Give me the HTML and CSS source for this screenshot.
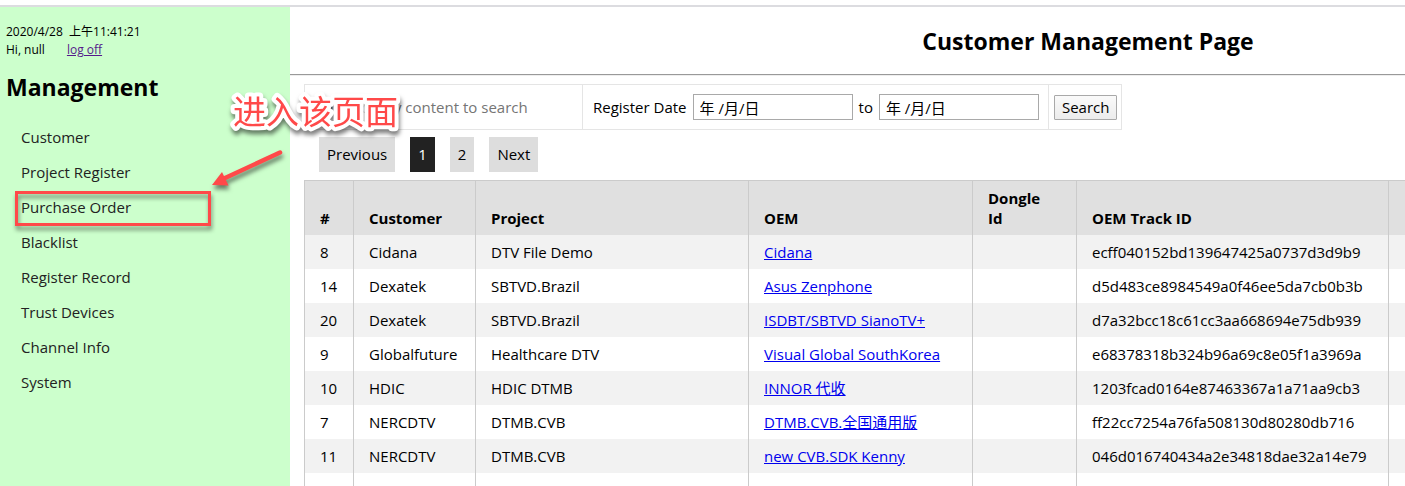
FILE: index.html
```
<!DOCTYPE html>
<html lang="en">
<head>
<meta charset="utf-8">
<title>Customer Management Page</title>
<link rel="stylesheet" href="styles.css">
</head>
<body>
<div class="layout">
  <aside class="sidebar">
    <div class="session">
      <div>2020/4/28 &nbsp;上午11:41:21</div>
      <div class="session-user"><span>Hi, null</span><a class="logoff" href="#">log off</a></div>
    </div>
    <h2 class="sidebar-title">Management</h2>
    <nav class="menu">
      <a href="#">Customer</a>
      <a href="#">Project Register</a>
      <a href="#" class="marked">Purchase Order</a>
      <a href="#">Blacklist</a>
      <a href="#">Register Record</a>
      <a href="#">Trust Devices</a>
      <a href="#">Channel Info</a>
      <a href="#">System</a>
    </nav>
  </aside>
  <main class="main">
    <header class="page-header"><h1>Customer Management Page</h1></header>
    <div class="content">
      <form class="search">
        <div class="search-text"><input type="text" aria-label="Search content" placeholder="Input query content to search"></div>
        <div class="search-dates">
          <label for="from">Register Date</label>
          <input id="from" type="text" value="年 /月/日">
          <label for="to">to</label>
          <input id="to" type="text" value="年 /月/日">
        </div>
        <div class="search-action"><button type="button">Search</button></div>
      </form>
      <nav class="pager">
        <a href="#">Previous</a>
        <a href="#" class="current">1</a>
        <a href="#">2</a>
        <a href="#">Next</a>
      </nav>
      <table class="records">
        <colgroup><col class="c-num"><col class="c-customer"><col class="c-project"><col class="c-oem"><col class="c-dongle"><col class="c-track"><col></colgroup>
        <thead>
          <tr><th>#</th><th>Customer</th><th>Project</th><th>OEM</th><th>Dongle<br>Id</th><th>OEM Track ID</th><th></th></tr>
        </thead>
        <tbody>
          <tr><td>8</td><td>Cidana</td><td>DTV File Demo</td><td><a href="#">Cidana</a></td><td></td><td>ecff040152bd139647425a0737d3d9b9</td><td></td></tr>
          <tr><td>14</td><td>Dexatek</td><td>SBTVD.Brazil</td><td><a href="#">Asus Zenphone</a></td><td></td><td>d5d483ce8984549a0f46ee5da7cb0b3b</td><td></td></tr>
          <tr><td>20</td><td>Dexatek</td><td>SBTVD.Brazil</td><td><a href="#">ISDBT/SBTVD SianoTV+</a></td><td></td><td>d7a32bcc18c61cc3aa668694e75db939</td><td></td></tr>
          <tr><td>9</td><td>Globalfuture</td><td>Healthcare DTV</td><td><a href="#">Visual Global SouthKorea</a></td><td></td><td>e68378318b324b96a69c8e05f1a3969a</td><td></td></tr>
          <tr><td>10</td><td>HDIC</td><td>HDIC DTMB</td><td><a href="#">INNOR 代收</a></td><td></td><td>1203fcad0164e87463367a1a71aa9cb3</td><td></td></tr>
          <tr><td>7</td><td>NERCDTV</td><td>DTMB.CVB</td><td><a href="#">DTMB.CVB.全国通用版</a></td><td></td><td>ff22cc7254a76fa508130d80280db716</td><td></td></tr>
          <tr><td>11</td><td>NERCDTV</td><td>DTMB.CVB</td><td><a href="#">new CVB.SDK Kenny</a></td><td></td><td>046d016740434a2e34818dae32a14e79</td><td></td></tr>
          <tr><td></td><td></td><td></td><td></td><td></td><td></td><td></td></tr>
        </tbody>
      </table>
    </div>
  </main>
</div>
<svg class="callout" width="220" height="120" viewBox="0 0 220 120">
  <text class="callout-text" x="31" y="42">进入该页面</text>
  <g class="callout-arrow">
    <path d="M78 70.500 L22 96.500" fill="none" stroke="#ff4949" stroke-width="4.500" stroke-linecap="round"/>
    <path d="M10 103 L20 90 L26.500 103.500 Z" fill="#ff4949"/>
  </g>
</svg>
</body>
</html>
```

FILE: styles.css
```
* { box-sizing: border-box; }

body {
  margin: 0;
  padding-top: 5px;
  height: 100vh;
  overflow: hidden;
  background: #fff;
  color: #000;
  font: 15px/18px "Open Sans", "Noto Sans CJK SC", sans-serif;
}

input, button { font: inherit; color: inherit; }

.layout {
  display: flex;
  height: 100%;
  overflow: hidden;
  border-top: 2px solid #dcdce0;
}

/* Sidebar */
.sidebar {
  flex: 0 0 290px;
  padding: 16px 6px;
  background: #cfc;
}
.session { font-size: 12px; }
.session-user { display: flex; gap: 22px; }
.logoff { color: #551a8b; }
.sidebar-title { margin: 12px 0 17px; font-size: 23px; line-height: 32px; }
.menu { display: flex; flex-direction: column; }
.menu a {
  position: relative;
  padding: 0 15px;
  line-height: 35px;
  color: #222;
  text-decoration: none;
}
.marked::after {
  content: "";
  position: absolute;
  inset: 1px 73px -1px 9px;
  border: 3px solid #ff4949;
  filter: drop-shadow(1px 4px 2px rgba(0, 0, 0, .45));
}

/* Main area keeps its desktop width and is clipped by narrow windows */
.main { flex: 1 0 1596px; }
.page-header {
  padding: 18px 0 17px;
  border-bottom: 1px solid #999;
  box-shadow: 0 1px 0 #eee;
}
.page-header h1 {
  margin: 0;
  font-size: 23px;
  line-height: 32px;
  text-align: center;
}
.content { padding: 9px 14px; }

.search {
  display: inline-flex;
  border: 1px solid #e5e5e5;
  vertical-align: top;
}
.search > div { display: flex; align-items: center; height: 44px; }
.search > div + div { border-left: 1px solid #e5e5e5; }
.search-text input {
  width: 277px;
  padding: 0 15px;
  border: 0;
  background: none;
}
.search-text input::placeholder { color: #757575; opacity: 1; }
.search-dates { gap: 6px; padding: 0 9px 0 10px; }
.search-dates input {
  width: 160px;
  height: 26px;
  padding: 0 6px;
  border: 1px solid #a9a9a9;
}
.search-action { padding: 0 4px 0 5px; }
.search-action button {
  height: 25px;
  padding: 0 7px;
  border: 1px solid #a9a9a9;
  border-radius: 1px;
  background: linear-gradient(#fafafa, #ececec);
}

.pager { display: flex; gap: 15px; padding: 7px 15px 8px; }
.pager a {
  padding: 0 8px;
  line-height: 35px;
  background: #ddd;
  color: #000;
  text-decoration: none;
}
.pager .current { background: #222; color: #fff; }

.records {
  width: 100%;
  table-layout: fixed;
  border-collapse: collapse;
  border: 1px solid #cbcbcb;
}
.records th, .records td {
  height: 34px;
  padding: 8px 15px;
  border-left: 1px solid #cbcbcb;
  text-align: left;
  white-space: nowrap;
}
.records th {
  background: #e0e0e0;
  line-height: 20px;
  padding: 7px 15px;
  vertical-align: bottom;
}
.records tbody tr:nth-child(odd) { background: #f2f2f2; }
.records a { color: #00e; }
.c-num { width: 49px; }
.c-customer { width: 122px; }
.c-project { width: 273px; }
.c-oem { width: 224px; }
.c-dongle { width: 104px; }
.c-track { width: 312px; }

/* Annotation lying over the page */
.callout {
  position: absolute;
  left: 202px;
  top: 82px;
  pointer-events: none;
}
.callout-text {
  font: 33px "Noto Sans CJK SC", sans-serif;
  fill: #ff4949;
  stroke: #fff;
  stroke-width: 8px;
  stroke-linejoin: round;
  paint-order: stroke;
  filter: drop-shadow(1px 4px 2px rgba(0, 0, 0, .5));
}
.callout-arrow { filter: drop-shadow(1px 4px 2px rgba(0, 0, 0, .5)); }
```
